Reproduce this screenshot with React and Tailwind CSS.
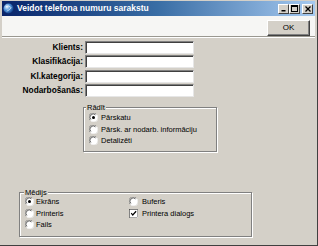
import React from "react";

function Radio({ checked }) {
  return (
    <svg width="9" height="9" viewBox="0 0 12 12" className="shrink-0">
      <circle cx="6" cy="6" r="5.5" fill="#ffffff" />
      <path d="M1.5 9.5 A5.5 5.5 0 0 1 9.5 1.5" stroke="#808080" strokeWidth="1.2" fill="none" />
      <path d="M2.6 8.6 A4.2 4.2 0 0 1 8.6 2.6" stroke="#404040" strokeWidth="1" fill="none" />
      <path d="M10.5 2.5 A5.5 5.5 0 0 1 2.5 10.5" stroke="#f0f0f0" strokeWidth="1.2" fill="none" />
      {checked && <circle cx="6" cy="6" r="2" fill="#000" />}
    </svg>
  );
}

function Check({ checked }) {
  return (
    <svg width="9" height="9" viewBox="0 0 12 12" className="shrink-0">
      <rect x="0" y="0" width="12" height="12" fill="#808080" />
      <rect x="1" y="1" width="11" height="11" fill="#ffffff" />
      <rect x="1" y="1" width="10" height="10" fill="#ffffff" stroke="#404040" strokeWidth="0.6" />
      {checked && <path d="M3 5.5 L5 8 L9.5 3" stroke="#000" strokeWidth="1.6" fill="none" />}
    </svg>
  );
}

function TitleBtn({ children, className = "" }) {
  return (
    <div className={"w-[11px] h-[10px] bg-[#d4d0c8] border-t border-l border-[#ffffff] border-r border-b border-r-[#404040] border-b-[#404040] flex items-center justify-center " + className}>
      {children}
    </div>
  );
}

function Input() {
  return (
    <div className="h-[13px] bg-white border-t border-l border-[#808080] border-r border-b border-r-[#e6e6e6] border-b-[#e6e6e6] shadow-[inset_1px_1px_0_#404040]" />
  );
}

export default function App() {
  const label = "text-right font-bold text-[8.3px] leading-[13px] text-black";
  return (
    <div className="w-[318px] h-[246px] bg-[#d4d0c8] flex flex-col pt-[1px] pl-[2px] pr-[2px] pb-[2px] border-r border-b border-[#404040] font-['Liberation_Sans',Arial,sans-serif] overflow-hidden">
      {/* Title bar */}
      <div className="h-[15px] shrink-0 bg-gradient-to-r from-[#0a246a] via-[#3a6ea5] to-[#a6caf0] flex items-center pl-[1px] pr-[2px]">
        <svg width="11" height="11" viewBox="0 0 12 12" className="shrink-0">
          <defs>
            <radialGradient id="g" cx="35%" cy="35%" r="70%">
              <stop offset="0%" stopColor="#e8f4ff" />
              <stop offset="50%" stopColor="#4a90d9" />
              <stop offset="100%" stopColor="#103a80" />
            </radialGradient>
          </defs>
          <circle cx="6" cy="6" r="5.5" fill="url(#g)" />
          <path d="M3 4 Q6 2 9 5 Q7 8 4 9" stroke="#ffffff" strokeWidth="0.8" fill="none" opacity="0.8" />
        </svg>
        <span className="ml-[3px] text-white font-bold text-[8.5px] leading-none whitespace-nowrap">
          Veidot telefona numuru sarakstu
        </span>
        <div className="ml-auto flex items-center">
          <TitleBtn>
            <svg width="6" height="6" viewBox="0 0 6 6"><rect x="0.5" y="4" width="4" height="1.5" fill="#000" /></svg>
          </TitleBtn>
          <TitleBtn>
            <svg width="7" height="7" viewBox="0 0 7 7"><rect x="0.5" y="0.5" width="6" height="6" fill="none" stroke="#000" strokeWidth="1" /><rect x="0.5" y="0.5" width="6" height="1.5" fill="#000" /></svg>
          </TitleBtn>
          <TitleBtn className="ml-[2px]">
            <svg width="6" height="6" viewBox="0 0 6 6"><path d="M0.5 0.5 L5.5 5.5 M5.5 0.5 L0.5 5.5" stroke="#000" strokeWidth="1.3" /></svg>
          </TitleBtn>
        </div>
      </div>

      {/* Toolbar */}
      <div className="h-[21px] shrink-0 bg-[#f6f6f4] flex justify-end items-start pt-[4px] pr-[5px] border-b border-[#9a9890] shadow-[0_1px_0_#ffffff]">
        <div className="w-[43px] h-[16px] bg-[#d4d0c8] border-t border-l border-[#ffffff] border-r border-b border-r-[#404040] border-b-[#404040] shadow-[inset_-1px_-1px_0_#808080] flex items-center justify-center text-[8px] text-black">
          OK
        </div>
      </div>

      {/* Body */}
      <div className="flex-1 flex flex-col pt-[4px]">
        <div className="grid grid-cols-[81px_109px] gap-x-[2px] gap-y-[1.4px]">
          <div className={label}>Klients:</div>
          <Input />
          <div className={label}>Klasifikācija:</div>
          <Input />
          <div className={label}>Kl.kategorija:</div>
          <Input />
          <div className={label}>Nodarbošanās:</div>
          <Input />
        </div>

        {/* Rādīt group */}
        <div className="relative ml-[81px] mt-[10px] w-[134px] h-[45px] border border-[#808080] shadow-[inset_1px_1px_0_#ffffff,1px_1px_0_#ffffff] pt-[4px] pl-[5px] text-[7.5px] text-black">
          <span className="absolute left-[2px] top-[-5px] bg-[#d4d0c8] px-[1px] leading-[9px]">Rādīt</span>
          <div className="h-[11.5px] flex items-center gap-[3px]"><Radio checked /><span>Pārskatu</span></div>
          <div className="h-[11.5px] flex items-center gap-[3px]"><Radio /><span>Pārsk. ar nodarb. informāciju</span></div>
          <div className="h-[11.5px] flex items-center gap-[3px]"><Radio /><span>Detalizēti</span></div>
        </div>

        {/* Mēdijs group */}
        <div className="relative ml-[17px] mt-[40px] w-[233px] h-[45px] border border-[#808080] shadow-[inset_1px_1px_0_#ffffff,1px_1px_0_#ffffff] pt-[3px] pl-[5px] text-[7.5px] text-black">
          <span className="absolute left-[4px] top-[-5px] bg-[#d4d0c8] px-[1px] leading-[9px]">Mēdijs</span>
          <div className="grid grid-cols-[104px_auto]">
            <div className="h-[11.5px] flex items-center gap-[2px]"><Radio checked /><span>Ekrāns</span></div>
            <div className="h-[11.5px] flex items-center gap-[4px]"><Radio /><span>Buferis</span></div>
            <div className="h-[11.5px] flex items-center gap-[2px]"><Radio /><span>Printeris</span></div>
            <div className="h-[11.5px] flex items-center gap-[4px]"><Check checked /><span>Printera dialogs</span></div>
            <div className="h-[11.5px] flex items-center gap-[2px]"><Radio /><span>Fails</span></div>
          </div>
        </div>
      </div>
    </div>
  );
}
